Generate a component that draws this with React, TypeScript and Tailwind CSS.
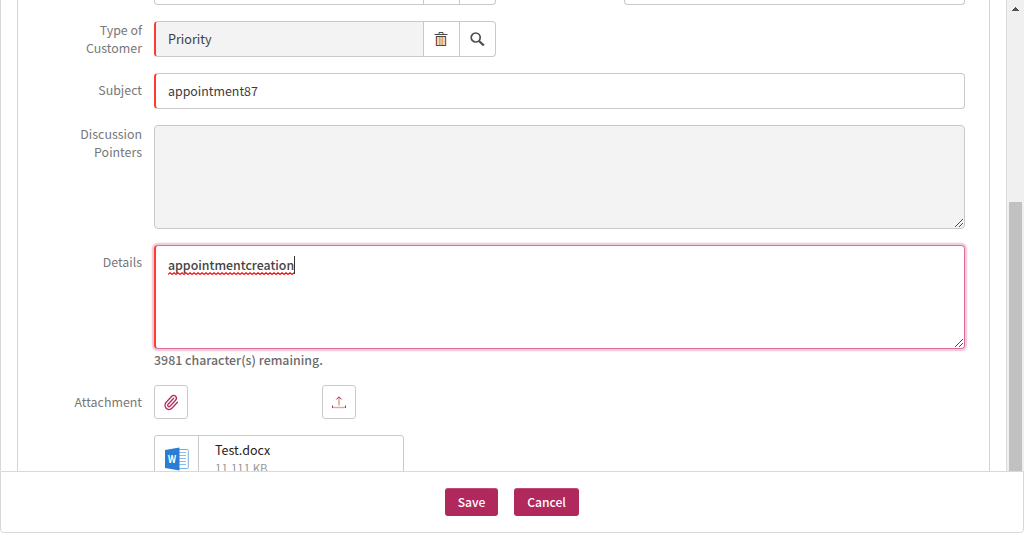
import type { ReactNode } from "react";

function Row({ label, pad = "pt-0", children }: { label: string; pad?: string; children?: ReactNode }) {
  return (
    <div className="flex">
      <div className={`w-[124px] shrink-0 pl-[50px] text-right leading-[18px] text-[#777] ${pad}`}>{label}</div>
      <div className="ml-3 w-[811px] shrink-0">{children}</div>
    </div>
  );
}

function Grip() {
  return (
    <svg className="absolute right-0 bottom-px" width="9" height="9" viewBox="0 0 9 9" shapeRendering="crispEdges">
      {[0, 1, 2, 3, 4, 5, 6, 7].map((i) => (
        <rect key={i} x={i} y={8 - i} width="1" height="1" fill="#505050" />
      ))}
      {[0, 1, 2, 3].map((i) => (
        <rect key={i} x={4 + i} y={8 - i} width="1" height="1" fill="#505050" />
      ))}
    </svg>
  );
}

function Squiggle() {
  const points = Array.from({ length: 64 }, (_, i) => `${i * 2},${i % 2 ? 0.8 : 2.4}`).join(" ");
  return (
    <svg className="absolute bottom-[-1px] left-0" width="127" height="3" viewBox="0 0 127 3">
      <polyline points={points} fill="none" stroke="#f00" strokeWidth="1.2" />
    </svg>
  );
}

function Trash() {
  return (
    <svg className="-ml-[2px]" width="14" height="15" viewBox="0 0 14 15" fill="none">
      <path d="M5 2V.5h4V2" stroke="#4a4a4a" />
      <path d="M.5 2.5h13" stroke="#4a4a4a" />
      <path d="M3.5 4.5h7v9h-7Z" fill="#fbd9ae" />
      <path d="M2.5 4.5v9" stroke="#8d5148" strokeWidth="1.4" />
      <path d="M11.5 4.5v9" stroke="#74635f" strokeWidth="1.4" />
      <path d="M2 13.5h10M2 4.5h10" stroke="#4a4a4a" />
      <path d="M5.5 5v8M8.5 5v8" stroke="#ee9f58" />
      <path d="M7 5v8" stroke="#8fb4dc" />
    </svg>
  );
}

function Search() {
  return (
    <svg width="15" height="15" viewBox="0 0 15 15" fill="none" stroke="#4d4d4d">
      <circle cx="5.7" cy="5.5" r="4.5" strokeWidth="1.7" />
      <path d="m9 9 4.8 4.5" strokeWidth="2.2" />
    </svg>
  );
}

function Clip() {
  return (
    <svg width="16" height="17" viewBox="0 0 24 24" preserveAspectRatio="none" fill="none" stroke="#b0285c" strokeWidth="1.9" strokeLinecap="round" strokeLinejoin="round">
      <path d="m16 6-8.414 8.586a2 2 0 0 0 2.829 2.829l8.414-8.586a4 4 0 1 0-5.657-5.657l-8.379 8.551a6 6 0 1 0 8.485 8.485l8.379-8.551" />
    </svg>
  );
}

function Upload() {
  return (
    <svg width="14" height="13" viewBox="0 0 14 13" fill="none">
      <path d="M7 9.5V1" stroke="#dc8b62" strokeWidth="1.2" />
      <path d="M4.3 3.5 7 .8l2.7 2.7" stroke="#b0285c" />
      <path d="M.5 9.5v2.4M13.5 9.5v2.4" stroke="#b0285c" />
      <path d="M1 11.5h12" stroke="#cfaac0" strokeWidth="1.4" />
    </svg>
  );
}

function WordIcon() {
  return (
    <svg width="24" height="24" viewBox="0 0 24 24">
      <rect x="13" y="2.5" width="10.3" height="19" rx="1" fill="#fff" stroke="#7baee0" />
      <path d="M14 5.5h7M14 8.5h7M14 11.5h7M14 14.5h7M14 17.5h7" stroke="#8fbbe6" />
      <path d="M0 3 14.5.5v23L0 21Z" fill="#2b7cd3" />
      <text x="7" y="16" textAnchor="middle" fill="#fff" fontSize="11" fontWeight="700" className="font-['Open_Sans',sans-serif]" textLength="8" lengthAdjust="spacingAndGlyphs">W</text>
    </svg>
  );
}

export default function App() {
  return (
    <div className="relative h-[533px] w-[1024px] overflow-hidden bg-white font-['Noto_Sans_CJK_SC','Noto_Sans',sans-serif] text-[12.4px] font-normal">
      <div className="flex h-[471px] overflow-hidden border-l border-[#d9d9d9]">
        <div className="ml-4 flex h-[560px] w-[973px] shrink-0 flex-col gap-4 border-x border-[#d3d3d3]">
          <div className="ml-[136px] flex h-[5px] w-[811px] shrink-0 justify-between">
            <div className="flex w-[342px] rounded-b-[4px] border border-t-0 border-[#c9c9c9]">
              <div className="grow" />
              <div className="w-9 border-l border-[#c9c9c9]" />
              <div className="w-9 border-l border-[#c9c9c9]" />
            </div>
            <div className="w-[341px] rounded-b-[4px] border border-t-0 border-[#c9c9c9]" />
          </div>
          <Row label="Type of Customer">
            <div className="flex h-9 w-[342px] overflow-hidden rounded-[4px] border border-l-2 border-[#c9c9c9] border-l-[#ff3b30]">
              <div className="flex grow items-center bg-[#f3f3f3] pl-3 text-[12.6px] text-[#3c3c3c]">Priority</div>
              <div className="flex w-9 items-center justify-center border-l border-[#c9c9c9]"><Trash /></div>
              <div className="flex w-9 items-center justify-center border-l border-[#c9c9c9]"><Search /></div>
            </div>
          </Row>
          <Row label="Subject" pad="pt-2">
            <div className="flex h-9 items-center rounded-[4px] border border-l-2 border-[#c9c9c9] border-l-[#ff3b30] pl-3 text-[#3c3c3c]">appointment87</div>
          </Row>
          <Row label="Discussion Pointers">
            <div className="relative h-[104px] rounded-[4px] border border-[#c9c9c9] bg-[#f3f3f3]"><Grip /></div>
          </Row>
          <div className="h-[124px]">
            <Row label="Details" pad="pt-2">
              <div className="relative flex h-[104px] items-start rounded-[4px] border border-l-2 border-[#dc6c9b] border-l-[#ff3b30] pt-[10px] pl-3 text-[12.35px] font-medium text-[#444] shadow-[0_0_0_2px_#f0cddc,0_0_2px_2px_#f0cddc]">
                <span className="relative leading-[18px]">appointmentcreation<Squiggle /></span>
                <span className="h-[18px] w-px bg-[#333]" />
                <Grip />
              </div>
              <div className="mt-[2px] leading-[18px] font-medium text-[#6c6c6c]">3981 character(s) remaining.</div>
            </Row>
          </div>
          <Row label="Attachment" pad="pt-2">
            <div className="flex">
              <div className="flex size-[34px] items-center justify-center rounded-[3px] border border-[#c9c9c9]"><Clip /></div>
              <div className="ml-[134px] flex size-[34px] items-center justify-center rounded-[3px] border border-[#c9c9c9]"><Upload /></div>
            </div>
          </Row>
          <div className="ml-[136px] flex h-[60px] w-[250px] shrink-0 rounded-[3px] border border-[#c9c9c9]">
            <div className="flex w-11 border-r border-[#c9c9c9] pt-[11px] pl-[10px]"><WordIcon /></div>
            <div className="pt-[5px] pl-4 leading-[18px]">
              <div className="text-[12.5px] text-[#222]">Test.docx</div>
              <div className="text-[11.5px] text-[#999]">11.111 KB</div>
            </div>
          </div>
        </div>
        <div className="ml-4 flex h-[471px] w-[18px] shrink-0 flex-col items-center border-l border-[#dcdcdc] bg-[#f0f0f0]">
          <svg className="mt-[7px] shrink-0" width="7" height="4" viewBox="0 0 7 4" shapeRendering="crispEdges" fill="#505050">
            <path d="M3 0h1v1h1v1h1v1h1v1H0V3h1V2h1V1h1Z" />
          </svg>
          <div className="mt-[191px] h-[269px] w-[13px] bg-[#c1c1c1]" />
        </div>
      </div>
      <div className="flex h-[62px] items-start justify-center gap-4 rounded-b-[4px] border border-[#d9d9d9] pt-4 text-[12.1px] font-medium text-white">
        <div className="flex h-7 w-[53px] items-center justify-center rounded-[3px] border-t border-[#bd4c79] bg-[#b0285c]">Save</div>
        <div className="flex h-7 w-[65px] items-center justify-center rounded-[3px] border-t border-[#bd4c79] bg-[#b0285c]">Cancel</div>
      </div>
    </div>
  );
}
